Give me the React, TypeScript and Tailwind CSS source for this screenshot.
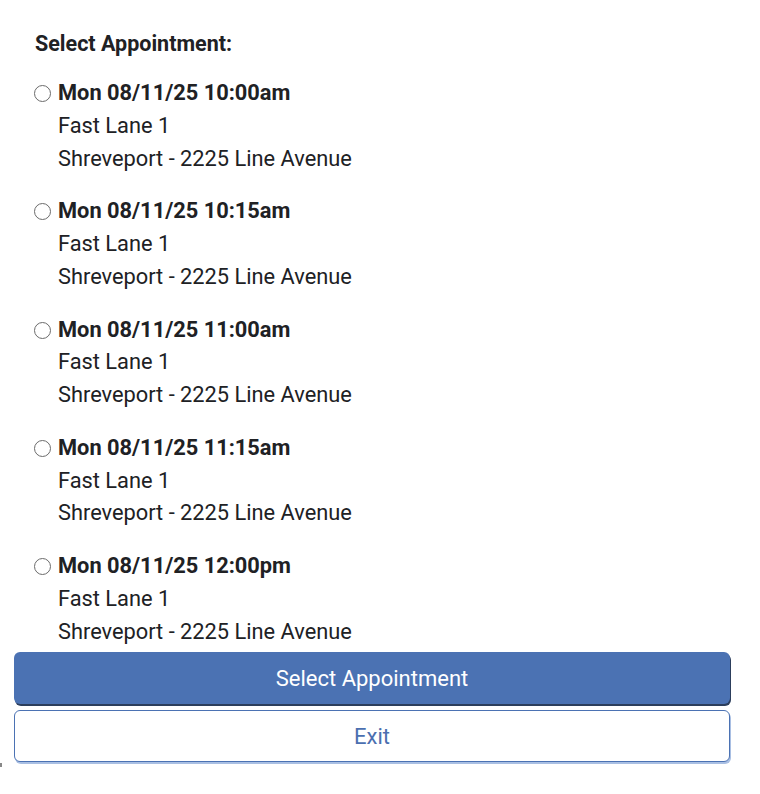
const slots = ["10:00am", "10:15am", "11:00am", "11:15am", "12:00pm"];

export default function App() {
  return (
    <div className="w-[760px] h-[794px] bg-white text-[#202124] relative" style={{ fontFamily: "Roboto, 'Liberation Sans', sans-serif" }}>
      <div className="pt-[32px] pl-[34px]">
        <div className="ml-[1px] text-[21.5px] leading-[24px] font-bold">Select Appointment:</div>
        <div className="mt-[21px] flex flex-col gap-[20px]">
          {slots.map((t) => (
            <label key={t} className="flex items-start text-[21.8px] leading-[32.75px]">
              <span className="mt-[8px] mr-[7px] w-[17px] h-[17px] rounded-full border border-[#6b6b6b] bg-white shrink-0" />
              <span className="flex flex-col">
                <span className="font-bold">Mon 08/11/25 {t}</span>
                <span>Fast Lane 1</span>
                <span>Shreveport - 2225 Line Avenue</span>
              </span>
            </label>
          ))}
        </div>
      </div>
      <div className="px-[14px] mt-[4px] w-[744px] flex flex-col gap-[6px]">
        <button className="h-[52px] rounded-[6px] bg-[#4b72b3] text-white text-[22px] shadow-[1px_2px_0_#2c3e5c]">
          Select Appointment
        </button>
        <button className="h-[52px] rounded-[6px] bg-white border border-[#4b72b3] text-[#4b6fb0] text-[22px] shadow-[1px_2px_0_#a9bfe3]">
          Exit
        </button>
      </div>
      <span className="absolute left-0 top-[763px] w-[2px] h-[4px] bg-[#888]" />
    </div>
  );
}
